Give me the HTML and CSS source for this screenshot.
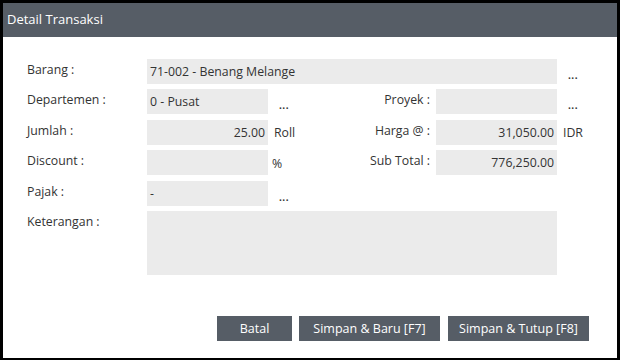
FILE: index.html
```html
<!DOCTYPE html>
<html lang="id">
<head>
    <meta charset="UTF-8">
    <title>Detail Transaksi</title>
    <link rel="stylesheet" href="styles.css">
</head>
<body>
    <div class="dialog">
        <div class="title">Detail Transaksi</div>

        <div class="form">
            <label class="lbl">Barang :</label>
            <div class="field wide">71-002 - Benang Melange</div>
            <span class="dots">...</span>

            <label class="lbl">Departemen :</label>
            <div class="field">0 - Pusat</div>
            <span class="dots">...</span>
            <label class="lbl right">Proyek :</label>
            <div class="field"></div>
            <span class="dots">...</span>

            <label class="lbl">Jumlah :</label>
            <div class="field num">25.00</div>
            <span class="unit">Roll</span>
            <label class="lbl right">Harga @ :</label>
            <div class="field num">31,050.00</div>
            <span class="unit">IDR</span>

            <label class="lbl">Discount :</label>
            <div class="field num"></div>
            <span class="unit pct">%</span>
            <label class="lbl right">Sub Total :</label>
            <div class="field num">776,250.00</div>
            <span></span>

            <label class="lbl">Pajak :</label>
            <div class="field">-</div>
            <span class="dots">...</span>
            <span></span><span></span><span></span>

            <label class="lbl">Keterangan :</label>
            <div class="field wide"></div>
        </div>

        <div class="actions">
            <button class="btn batal">Batal</button>
            <button class="btn">Simpan &amp; Baru [F7]</button>
            <button class="btn">Simpan &amp; Tutup [F8]</button>
        </div>
    </div>
</body>
</html>
```

FILE: styles.css
```css
* {
    box-sizing: border-box;
}
body {
    margin: 0;
    font-family: "Open Sans", "Noto Sans", sans-serif;
    font-size: 12.3px;
    color: #333;
    background: #fff;
}
.dialog {
    width: 620px;
    height: 360px;
    border: 3px solid #000;
    border-bottom-width: 2px;
    background: #fff;
}
.title {
    height: 34px;
    line-height: 33px;
    padding-left: 4px;
    background: #565d66;
    color: #fff;
    font-size: 13px;
}
.form {
    display: grid;
    grid-template-columns: 120px 121px 40px 128px 121px 1fr;
    grid-template-rows: repeat(5, 25px) 64px;
    row-gap: 5.4px;
    padding: 22px 0 0 24px;
}
.lbl {
    line-height: 22px;
}
.lbl.right {
    text-align: right;
    padding-right: 6px;
}
.field {
    background: #ebebeb;
    padding: 0 3px;
    line-height: 25px;
    white-space: nowrap;
    overflow: hidden;
}
.field.wide {
    grid-column: 2 / 6;
}
.field.num {
    text-align: right;
}
.dots {
    align-self: end;
    padding-left: 11px;
    font-weight: bold;
    font-size: 10px;
    line-height: 18px;
    letter-spacing: 0.5px;
}
.unit {
    line-height: 25px;
    padding-left: 6px;
}
.unit.pct {
    padding-left: 4px;
    line-height: 28px;
}
.actions {
    display: flex;
    justify-content: flex-end;
    gap: 7px;
    padding: 41px 28px 0 0;
}
.btn {
    width: 141px;
    height: 25px;
    border: none;
    background: #565d66;
    color: #fff;
    font-family: "Open Sans", "Noto Sans", sans-serif;
    font-size: 12.5px;
    padding: 0;
}
.btn.batal {
    width: 75px;
}
.btn + .btn + .btn {
    margin-left: 1px;
}
```
